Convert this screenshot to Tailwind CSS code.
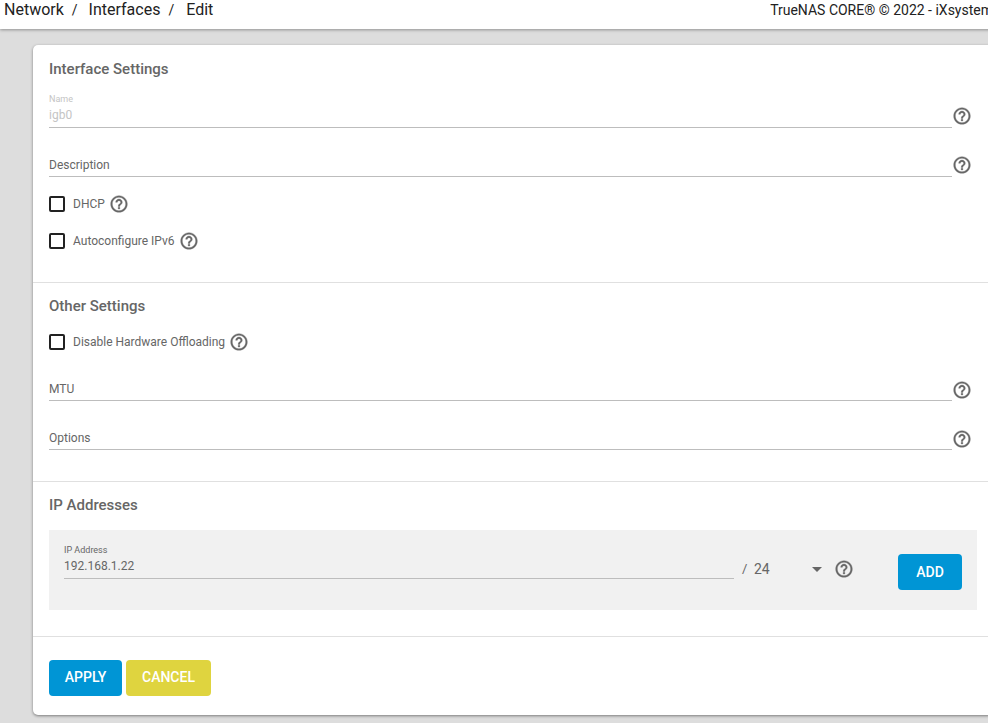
<!DOCTYPE html>
<html>
<head>
<meta charset="utf-8">
<script src="https://cdn.jsdelivr.net/npm/@tailwindcss/browser@4"></script>
</head>
<body class="m-0 h-[723px] w-[988px] overflow-hidden bg-[#dddddd] font-['Roboto',sans-serif] text-[#666666]">
<header class="relative z-10 flex h-[29px] w-[1029px] items-center justify-between bg-white pl-[4px] shadow-[0_1px_3px_rgba(0,0,0,0.35)] text-[#222222]">
  <nav class="flex items-center text-[16px] leading-[18px] -mt-[10px] h-[18px]">
    <span>Network</span><span class="ml-[8px] mr-[11px] text-[14px]">/</span><span>Interfaces</span><span class="ml-[8px] mr-[12px] text-[14px]">/</span><span>Edit</span>
  </nav>
  <span class="-mt-[10px] text-[14px] leading-[18px] whitespace-nowrap">TrueNAS CORE® © 2022 - iXsystems, Inc.</span>
</header>
<main class="ml-[33px] mt-[16px] h-[670px] w-[960px] rounded-[5px] bg-white shadow-[0_1px_3px_rgba(0,0,0,0.45)]">
  <section class="h-[238px] border-b border-[#e0e0e0] px-[16px]">
    <h2 class="flex h-[48px] items-center text-[15px] font-medium text-[#666666]">Interface Settings</h2>
    <div class="flex h-[35px] items-end">
      <div class="h-[35px] w-[903px] border-b border-[#bdbdbd]">
        <div class="text-[9px] leading-[12px] text-[#c4c4c4]">Name</div>
        <div class="mt-[2px] text-[12px] leading-[17px] text-[#c4c4c4]">igb0</div>
      </div>
      <svg class="mb-[2px] h-[20px] w-[20px] fill-[#666666] stroke-[#666666] stroke-[0.4]" viewBox="0 0 24 24"><path d="M11 18h2v-2h-2v2zm1-16C6.48 2 2 6.48 2 12s4.48 10 10 10 10-4.48 10-10S17.52 2 12 2zm0 18c-4.41 0-8-3.59-8-8s3.59-8 8-8 8 3.59 8 8-3.59 8-8 8zm0-14c-2.21 0-4 1.79-4 4h2c0-1.1.9-2 2-2s2 .9 2 2c0 2-3 1.75-3 5h2c0-2.25 3-2.5 3-5 0-2.21-1.79-4-4-4z"/></svg>
    </div>
    <div class="flex h-[49px] items-end">
      <div class="flex h-[24px] w-[903px] items-center border-b border-[#bdbdbd] text-[12px]">Description</div>
      <svg class="mb-[2px] h-[20px] w-[20px] fill-[#666666] stroke-[#666666] stroke-[0.4]" viewBox="0 0 24 24"><path d="M11 18h2v-2h-2v2zm1-16C6.48 2 2 6.48 2 12s4.48 10 10 10 10-4.48 10-10S17.52 2 12 2zm0 18c-4.41 0-8-3.59-8-8s3.59-8 8-8 8 3.59 8 8-3.59 8-8 8zm0-14c-2.21 0-4 1.79-4 4h2c0-1.1.9-2 2-2s2 .9 2 2c0 2-3 1.75-3 5h2c0-2.25 3-2.5 3-5 0-2.21-1.79-4-4-4z"/></svg>
    </div>
    <div class="mt-[8px] flex h-[37px] items-center gap-[8px]">
      <span class="h-[16px] w-[16px] rounded-[2px] border-2 border-[#222222]"></span>
      <span class="text-[12px]">DHCP</span>
      <svg class="-ml-[4px] h-[20px] w-[20px] fill-[#666666] stroke-[#666666] stroke-[0.4]" viewBox="0 0 24 24"><path d="M11 18h2v-2h-2v2zm1-16C6.48 2 2 6.48 2 12s4.48 10 10 10 10-4.48 10-10S17.52 2 12 2zm0 18c-4.41 0-8-3.59-8-8s3.59-8 8-8 8 3.59 8 8-3.59 8-8 8zm0-14c-2.21 0-4 1.79-4 4h2c0-1.1.9-2 2-2s2 .9 2 2c0 2-3 1.75-3 5h2c0-2.25 3-2.5 3-5 0-2.21-1.79-4-4-4z"/></svg>
    </div>
    <div class="flex h-[37px] items-center gap-[8px]">
      <span class="h-[16px] w-[16px] rounded-[2px] border-2 border-[#222222]"></span>
      <span class="text-[12px]">Autoconfigure IPv6</span>
      <svg class="-ml-[4px] h-[20px] w-[20px] fill-[#666666] stroke-[#666666] stroke-[0.4]" viewBox="0 0 24 24"><path d="M11 18h2v-2h-2v2zm1-16C6.48 2 2 6.48 2 12s4.48 10 10 10 10-4.48 10-10S17.52 2 12 2zm0 18c-4.41 0-8-3.59-8-8s3.59-8 8-8 8 3.59 8 8-3.59 8-8 8zm0-14c-2.21 0-4 1.79-4 4h2c0-1.1.9-2 2-2s2 .9 2 2c0 2-3 1.75-3 5h2c0-2.25 3-2.5 3-5 0-2.21-1.79-4-4-4z"/></svg>
    </div>
  </section>
  <section class="h-[199px] border-b border-[#e0e0e0] px-[16px]">
    <h2 class="flex h-[47px] items-center text-[15px] font-medium">Other Settings</h2>
    <div class="flex h-[24px] items-center gap-[8px]">
      <span class="h-[16px] w-[16px] rounded-[2px] border-2 border-[#222222]"></span>
      <span class="text-[12px]">Disable Hardware Offloading</span>
      <svg class="-ml-[4px] h-[20px] w-[20px] fill-[#666666] stroke-[#666666] stroke-[0.4]" viewBox="0 0 24 24"><path d="M11 18h2v-2h-2v2zm1-16C6.48 2 2 6.48 2 12s4.48 10 10 10 10-4.48 10-10S17.52 2 12 2zm0 18c-4.41 0-8-3.59-8-8s3.59-8 8-8 8 3.59 8 8-3.59 8-8 8zm0-14c-2.21 0-4 1.79-4 4h2c0-1.1.9-2 2-2s2 .9 2 2c0 2-3 1.75-3 5h2c0-2.25 3-2.5 3-5 0-2.21-1.79-4-4-4z"/></svg>
    </div>
    <div class="flex h-[47px] items-end">
      <div class="flex h-[24px] w-[903px] items-center border-b border-[#bdbdbd] text-[12px]">MTU</div>
      <svg class="mb-[1px] h-[20px] w-[20px] fill-[#666666] stroke-[#666666] stroke-[0.4]" viewBox="0 0 24 24"><path d="M11 18h2v-2h-2v2zm1-16C6.48 2 2 6.48 2 12s4.48 10 10 10 10-4.48 10-10S17.52 2 12 2zm0 18c-4.41 0-8-3.59-8-8s3.59-8 8-8 8 3.59 8 8-3.59 8-8 8zm0-14c-2.21 0-4 1.79-4 4h2c0-1.1.9-2 2-2s2 .9 2 2c0 2-3 1.75-3 5h2c0-2.25 3-2.5 3-5 0-2.21-1.79-4-4-4z"/></svg>
    </div>
    <div class="flex h-[49px] items-end">
      <div class="flex h-[24px] w-[903px] items-center border-b border-[#bdbdbd] text-[12px]">Options</div>
      <svg class="mb-[1px] h-[20px] w-[20px] fill-[#666666] stroke-[#666666] stroke-[0.4]" viewBox="0 0 24 24"><path d="M11 18h2v-2h-2v2zm1-16C6.48 2 2 6.48 2 12s4.48 10 10 10 10-4.48 10-10S17.52 2 12 2zm0 18c-4.41 0-8-3.59-8-8s3.59-8 8-8 8 3.59 8 8-3.59 8-8 8zm0-14c-2.21 0-4 1.79-4 4h2c0-1.1.9-2 2-2s2 .9 2 2c0 2-3 1.75-3 5h2c0-2.25 3-2.5 3-5 0-2.21-1.79-4-4-4z"/></svg>
    </div>
  </section>
  <section class="h-[155px] border-b border-[#e0e0e0] px-[16px]">
    <h2 class="flex h-[47px] items-center text-[15px] font-medium">IP Addresses</h2>
    <div class="mt-[1px] flex h-[80px] w-[928px] items-start bg-[#f1f1f1] pl-[15px] pt-[14px]">
      <div class="h-[35px] w-[670px] border-b border-[#bdbdbd]">
        <div class="text-[9px] leading-[12px] text-[#666666]">IP Address</div>
        <div class="mt-[2px] text-[12px] leading-[17px]">192.168.1.22</div>
      </div>
      <div class="mt-[13px] flex h-[24px] w-[102px] items-center pl-[8px] text-[14px]">
        <span class="w-[12px] text-[13px]">/</span><span class="w-[58px]">24</span>
        <span class="h-0 w-0 border-x-[5px] border-t-[5px] border-x-transparent border-t-[#666666]"></span>
      </div>
      <svg class="mt-[15px] -ml-[2px] h-[20px] w-[20px] fill-[#666666] stroke-[#666666] stroke-[0.4]" viewBox="0 0 24 24"><path d="M11 18h2v-2h-2v2zm1-16C6.48 2 2 6.48 2 12s4.48 10 10 10 10-4.48 10-10S17.52 2 12 2zm0 18c-4.41 0-8-3.59-8-8s3.59-8 8-8 8 3.59 8 8-3.59 8-8 8zm0-14c-2.21 0-4 1.79-4 4h2c0-1.1.9-2 2-2s2 .9 2 2c0 2-3 1.75-3 5h2c0-2.25 3-2.5 3-5 0-2.21-1.79-4-4-4z"/></svg>
      <button class="ml-[44px] mt-[10px] flex h-[36px] w-[64px] items-center justify-center rounded-[4px] bg-[#0095d5] text-[14px] font-medium text-white">ADD</button>
    </div>
  </section>
  <div class="flex gap-[4px] px-[16px] pt-[23px]">
    <button class="flex h-[36px] w-[73px] items-center justify-center rounded-[4px] bg-[#0095d5] pb-[1px] text-[14px] font-medium text-white">APPLY</button>
    <button class="flex h-[36px] w-[85px] items-center justify-center rounded-[4px] bg-[#dfd43f] pb-[1px] text-[14px] font-medium text-white">CANCEL</button>
  </div>
</main>
</body>
</html>
